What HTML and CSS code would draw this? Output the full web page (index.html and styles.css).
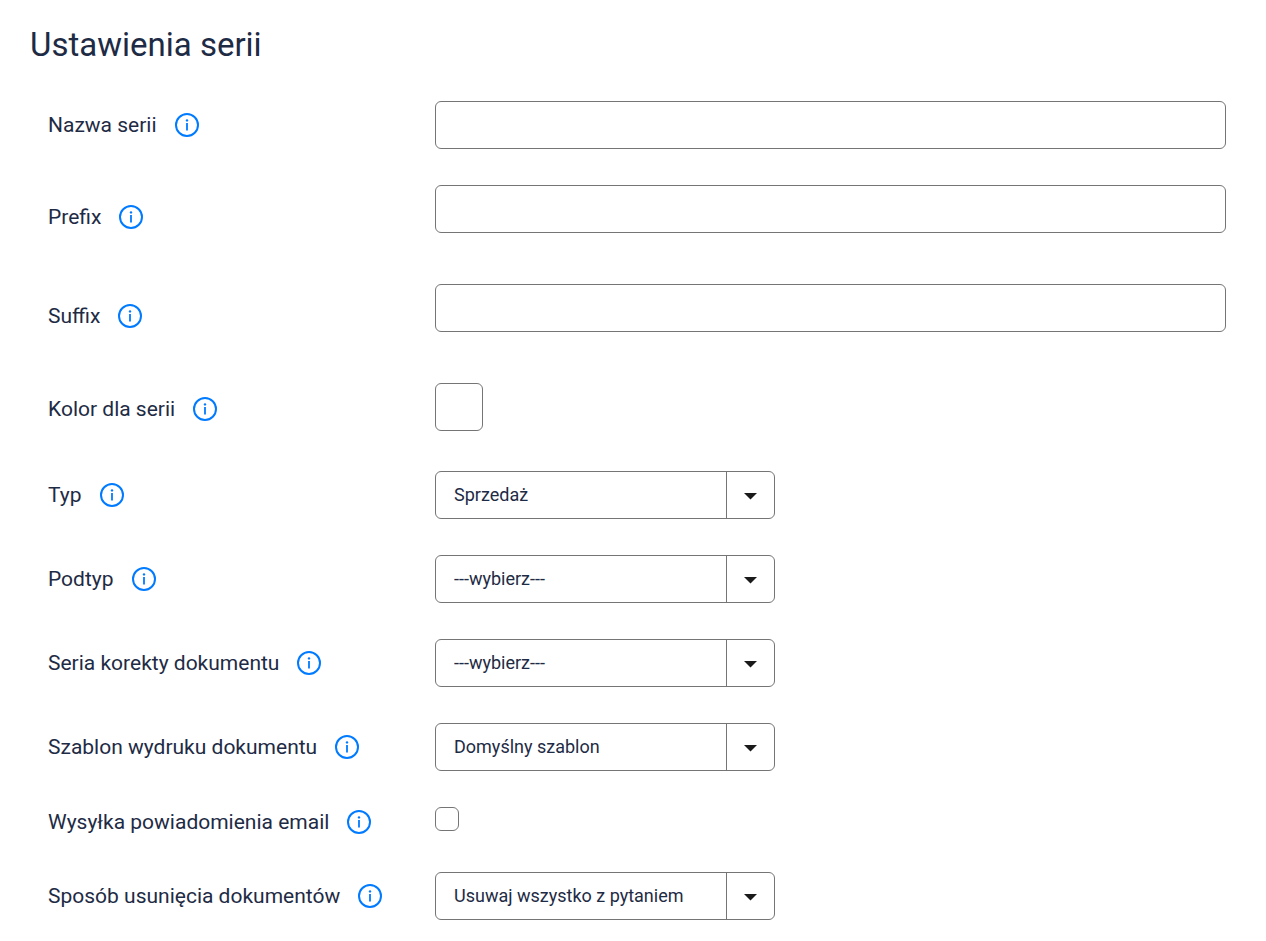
FILE: index.html
```
<!DOCTYPE html>
<html lang="pl">
<head>
<meta charset="utf-8">
<meta name="viewport" content="width=device-width, initial-scale=1">
<title>Ustawienia serii</title>
<link rel="stylesheet" href="styles.css">
</head>
<body>
<svg class="sprite" aria-hidden="true">
  <symbol id="info" viewBox="0 0 24 24">
    <circle cx="12" cy="12" r="11" fill="none" stroke="currentColor" stroke-width="2"/>
    <circle cx="12" cy="7.4" r="1.2" fill="currentColor"/>
    <path d="M11.1 10h1.8v7.6h-1.8z" fill="currentColor"/>
  </symbol>
  <symbol id="caret" viewBox="0 0 13 7">
    <path d="M0 0h13L6.5 6.5z" fill="currentColor"/>
  </symbol>
</svg>
<main class="page">
  <h1 class="title">Ustawienia serii</h1>
  <form class="form">
    <div class="row">
      <div class="caption"><label for="name">Nazwa serii</label><button class="info" type="button" aria-label="Informacja"><svg><use href="#info"/></svg></button></div>
      <input class="field" id="name" type="text">
    </div>
    <div class="row row-tall">
      <div class="caption"><label for="prefix">Prefix</label><button class="info" type="button" aria-label="Informacja"><svg><use href="#info"/></svg></button></div>
      <input class="field" id="prefix" type="text">
    </div>
    <div class="row row-tall">
      <div class="caption"><label for="suffix">Suffix</label><button class="info" type="button" aria-label="Informacja"><svg><use href="#info"/></svg></button></div>
      <input class="field" id="suffix" type="text">
    </div>
    <div class="row row-color">
      <div class="caption"><label for="color">Kolor dla serii</label><button class="info" type="button" aria-label="Informacja"><svg><use href="#info"/></svg></button></div>
      <input class="swatch" id="color" type="color" value="#ffffff">
    </div>
    <div class="row">
      <div class="caption"><label for="type">Typ</label><button class="info" type="button" aria-label="Informacja"><svg><use href="#info"/></svg></button></div>
      <div class="select"><select id="type"><option>Sprzedaż</option></select><span class="arrow"><svg><use href="#caret"/></svg></span></div>
    </div>
    <div class="row">
      <div class="caption"><label for="subtype">Podtyp</label><button class="info" type="button" aria-label="Informacja"><svg><use href="#info"/></svg></button></div>
      <div class="select"><select id="subtype"><option>---wybierz---</option></select><span class="arrow"><svg><use href="#caret"/></svg></span></div>
    </div>
    <div class="row">
      <div class="caption"><label for="correction">Seria korekty dokumentu</label><button class="info" type="button" aria-label="Informacja"><svg><use href="#info"/></svg></button></div>
      <div class="select"><select id="correction"><option>---wybierz---</option></select><span class="arrow"><svg><use href="#caret"/></svg></span></div>
    </div>
    <div class="row">
      <div class="caption"><label for="template">Szablon wydruku dokumentu</label><button class="info" type="button" aria-label="Informacja"><svg><use href="#info"/></svg></button></div>
      <div class="select"><select id="template"><option>Domyślny szablon</option></select><span class="arrow"><svg><use href="#caret"/></svg></span></div>
    </div>
    <div class="row">
      <div class="caption"><label for="email">Wysyłka powiadomienia email</label><button class="info" type="button" aria-label="Informacja"><svg><use href="#info"/></svg></button></div>
      <input class="check" id="email" type="checkbox">
    </div>
    <div class="row">
      <div class="caption"><label for="removal">Sposób usunięcia dokumentów</label><button class="info" type="button" aria-label="Informacja"><svg><use href="#info"/></svg></button></div>
      <div class="select"><select id="removal"><option>Usuwaj wszystko z pytaniem</option></select><span class="arrow"><svg><use href="#caret"/></svg></span></div>
    </div>
  </form>
</main>
</body>
</html>
```
FILE: styles.css
```
*,
*::before,
*::after {
  box-sizing: border-box;
}

body {
  margin: 0;
  background: #fff;
  color: #1e2b45;
  font-family: Roboto, "Liberation Sans", sans-serif;
}

.sprite {
  display: none;
}

.page {
  padding: 25px 40px 20px 30px;
}

.title {
  margin: 0 0 36px;
  font-size: 33px;
  line-height: 40px;
  font-weight: 400;
}

.form {
  display: grid;
  gap: 36px;
  padding-left: 18px;
}

.row {
  display: grid;
  grid-template-columns: 387px minmax(0, 1fr);
  align-items: start;
}

.row-tall {
  min-height: 63px;
}

.row-color {
  min-height: 52px;
}

.caption {
  display: flex;
  align-items: center;
  align-self: center;
  gap: 18px;
  min-height: 29px;
  font-size: 21px;
  line-height: 28px;
}

.info {
  width: 24px;
  height: 24px;
  padding: 0;
  border: 0;
  background: none;
  color: #007bff;
  cursor: pointer;
}

.info svg {
  display: block;
  width: 24px;
  height: 24px;
}

.field,
.swatch,
.check,
.select select {
  appearance: none;
  margin: 0;
  border: 1px solid #757575;
  border-radius: 6px;
  background: #fff;
  color: inherit;
  font-family: inherit;
  font-size: 18px;
}

.field {
  width: 100%;
  height: 48px;
  padding: 0 18px;
}

.swatch {
  width: 48px;
  height: 48px;
  padding: 4px;
}

.swatch::-webkit-color-swatch {
  border: 0;
}

.check {
  width: 24px;
  height: 24px;
}

.check:checked {
  background: #007bff;
}

.select {
  display: grid;
  grid-template-columns: minmax(0, 1fr) 49px;
  width: 100%;
  max-width: 340px;
}

.select select {
  grid-area: 1 / 1 / 2 / 3;
  height: 48px;
  padding: 0 60px 2px 18px;
}

.arrow {
  grid-area: 1 / 2;
  display: flex;
  align-items: center;
  justify-content: center;
  padding: 2px 1px 0 0;
  border-left: 1px solid #757575;
  color: #1a1a1a;
  pointer-events: none;
}

.arrow svg {
  width: 13px;
  height: 7px;
}
```
